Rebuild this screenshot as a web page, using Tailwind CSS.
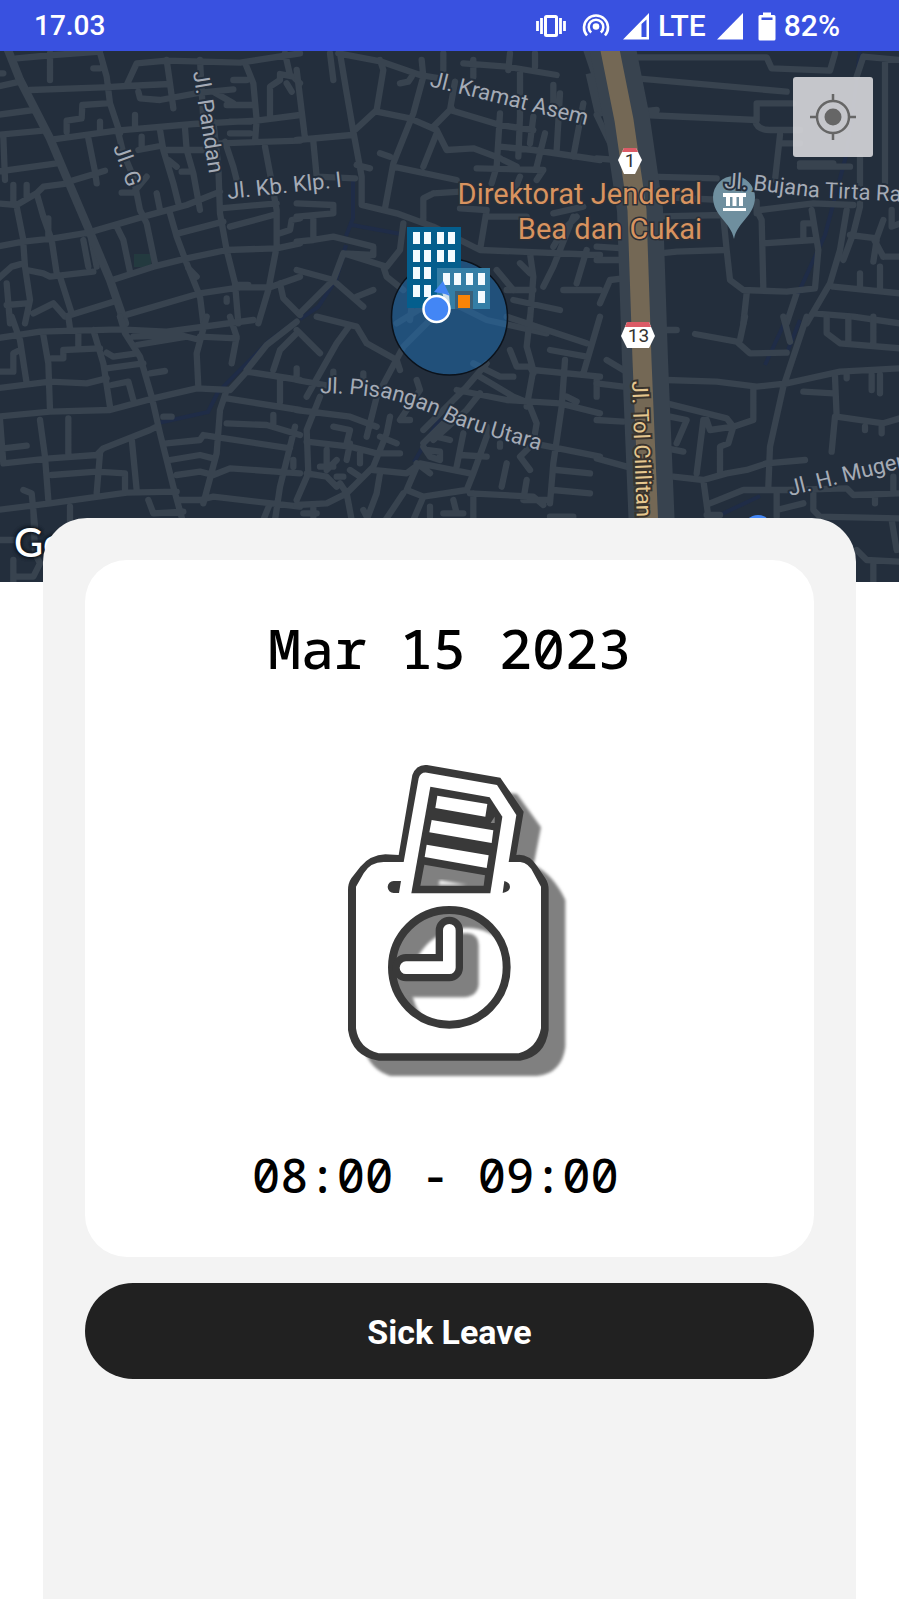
<!DOCTYPE html>
<html lang="id">
<head>
<meta charset="utf-8">
<meta name="viewport" content="width=device-width, initial-scale=1">
<title>Attendance</title>
<script src="https://cdn.jsdelivr.net/npm/@tailwindcss/browser@4"></script>
</head>
<body class="flex min-h-screen flex-col bg-white font-['Roboto',sans-serif] text-black">
<header class="flex h-[51px] items-center bg-[#3951e0] pr-[59px] pl-[34px] font-medium text-white">
  <time class="flex-1 text-[28px] leading-[32px]">17.03</time>
  <div class="flex items-center text-[30px] leading-[32px]">
    <svg class="mr-4 h-[30px] w-[30px]" viewBox="0 0 30 30" fill="none" stroke="#fff" aria-label="Vibrate"><rect x="9.5" y="5.500" width="11" height="19" rx="1" stroke-width="3"/><path d="M5.500 7v16M1.500 10v10M24.500 7v16M28.500 10v10" stroke-width="2.800"/></svg>
    <svg class="mr-3 h-[30px] w-[28px]" viewBox="0 0 28 30" fill="none" stroke="#fff" stroke-width="2.600" aria-label="Hotspot"><circle cx="14" cy="15.500" r="3.300" fill="#fff" stroke="none"/><path d="M9.200 21.500a7.300 7.300 0 1 1 9.600 0M5 24.500a12 12 0 1 1 18 0"/></svg>
    <svg class="mr-2 h-[30px] w-[28px]" viewBox="0 0 28 30" fill="#fff" aria-label="Signal"><path fill-rule="evenodd" d="M1 28.500 27 2v26.500zM19.500 13v13h5V8.500z"/></svg>
    <span>LTE</span>
    <svg class="ml-2.5 h-[30px] w-[28px]" viewBox="0 0 28 30" fill="#fff" aria-label="Signal"><path d="M1 28.500 27 2v26.500z"/></svg>
    <svg class="mr-2 ml-3.5 h-[30px] w-[18px]" viewBox="0 0 18 30" fill="#fff" aria-label="Battery"><path fill-rule="evenodd" d="M5 1.500h8V4h3q1.500 0 1.500 1.500V28q0 1.500-1.500 1.500H2Q.5 29.500.5 28V5.500Q.5 4 2 4h3zM3.500 6.500V9h11V6.500z"/></svg>
    <span>82%</span>
  </div>
</header>

<section class="relative h-[531px] overflow-hidden bg-[#232e3c]" aria-label="Map">
  <svg class="block h-full w-full" viewBox="0 51 899 531" preserveAspectRatio="xMidYMid slice" font-family="Roboto, sans-serif">
    <!-- waterways -->
    <g fill="none" stroke="#1f2c47" stroke-width="4">
      <path d="M353 180v38l-7 18M352 225l49 9M346 245l-10 35-18 27-18 12M295 322l-27 20-50 50-10 20-50 11M440 418l-26 44M860 50q-6 60-15 110l-20 75-30 65-30 65M800 320l-12 30M722 514l38-18"/>
    </g>
    <rect x="134" y="254" width="17" height="13" fill="#233a3f"/>
    <!-- streets, drawn on a 3x grid per tile -->
    <g fill="none" stroke="#38434f" stroke-width="19" stroke-linejoin="round" stroke-linecap="round">
      <g transform="translate(0 50) scale(.33333)">
        <path d="M20-10 60 90 150 265 205 395 265 535 330 690 375 820M-10 110 60 95M90 120 310 112 380 108 510 102M295-10 320 80 330 160 360 250M50 25 160 15 300 5M150 10V90M380 105 410 40 500 32 720 38 900 10M500 30 510 100 520 175M-10 195 100 180M-10 255 130 242M160 268 350 242 580 222 770 212 900 195M200 245V212L245 205 247 165 320 160M300 240V215M405 235V195M415 125 420 145 480 150 600 128 700 118M735 38 760 100 770 210 765 275M680 165 765 165M690 215H750M690 250H750M700 90H740M265 265 285 365 290 400M205 395 315 362M-10 365 170 340M-10 460 50 465 110 430 130 410 205 400M40 405V460M80 405V440M50 470 70 570M110 430 130 500 155 570 170 670M145 505V560M-10 590 70 575 160 565 265 548 430 500 560 465 660 425M355 250 370 310 400 380 420 480 440 520 465 640M350 530 370 570 390 665M415 300 480 288M425 260V290M480 240 490 300 520 400 535 460M555 235 560 300 580 370 600 480M500 300 650 300M505 330 530 350M545 365H570M470 430 480 480M365 428H400L440 380M600 30 610 210M640 215 655 350 660 490 680 600 705 700 715 820M675 275 700 350 710 390M660 280 900 272M795 290 810 370 830 480 830 590 805 720 775 820M660 475 830 460M690 530 820 495M510 490 530 560 560 640 600 740 610 820M535 550 670 515M330 692 460 650 560 625 680 600 830 595 900 580M565 655 590 680M360 800 600 730 720 712 810 712 900 680M250 570 265 650M270 550 290 650M70 580 75 650 90 750 75 820M-10 690 35 650 70 640M80 660 130 670 150 680 280 665M180 680 215 790M100 790 160 760 195 800 340 755M20 700 30 820M20 765 80 760M840 700 850 745 900 795M680 745V755M855 10 870 75M810 200V110L840 90V72L880 80 900 100M860 100 875 125M840 550 870 540 875 510 900 505M-10 170V340M10 260 15 390M640 125 700 160M0 70H10M280 55H300M745 705H715"/>
        <path stroke-width="25" d="M20-10 60 90 150 265 205 395 265 535 330 690 375 820"/>
      </g>
      <g transform="translate(300 50) scale(.33333)">
        <path d="M-10 60 15 265M90 10 100 90M120 10 140 130 160 245 185 380 185 465 290 490 400 530M115 10 245 35 360 75 420 85M240 30 250 60 230 180 165 240M230 185 330 205 410 240 440 300 520 295 600 325M365 30 370 80 340 190 280 340 255 475M300 100 325 95 335 80M-10 270 155 255M40 275 50 380 165 385M240 310 270 320M170 345 210 355M280 350 470 390M410 250 370 350M455 175 400 230M450 180 600 225 700 240M430 10V80M465 95 450 180M490 40 620 50 770 75M520 30V80M630 10 625 60M705 10V50M660 70V200M760 105V180M600 190 590 350 575 400M660 200 655 320M600 290 700 300 900 330M610 330 650 350M530 355 730 360 710 390M735 250 710 350M700 200 690 280M780 130 770 300M850 160 820 320M660 380 640 430M400 430 370 445V510M400 430 480 425M480 475 560 480M760 490 850 470M820 500 760 650 730 710M560 480 540 600M570 500 680 500M400 530 540 600 900 615M480 570 540 600M690 610 700 680 690 810M-10 460 100 465V490L-10 500M40 500V570L-10 575M40 570 100 560 220 590V615L130 610 100 690-10 660M130 610 260 650 300 600 310 520M100 690 0 790M110 700 190 770M250 650 260 680 310 720M170 740 220 720M640 750 780 780M620 720 700 720M790 720H900M660 640 690 670M760 590 790 540 830 500M860 600 830 700"/>
        <path stroke-width="27" stroke-linecap="butt" d="M860-10 900 110M900 200 870 70"/>
        <path d="M290 820 420 740 560 810 740 850M590 660 640 720M350 640 330 810"/>
      </g>
      <g transform="translate(600 50) scale(.33333)">
        <path d="M90 22H500L515 55 690 62 705 10M110 85 560 125M120 185 170 180M130 195 470 210V160H580M465 210Q470 240 510 240H600M540 255 525 390M545 280H600M150 380 350 385M150 440 370 450M150 500 370 495M180 610 230 605 370 600M370 500 380 600 390 690 430 720 560 725 645 715 655 600 635 480M470 480 485 510 490 715M480 480 640 460 760 465M490 580 640 570M610 570V520H640M440 730 430 820M590 730 560 820M740 480 720 600 690 700 620 820M750 350H600M780 320V470L760 550 730 630M750 555 830 565 850 510M830 570 820 635M850 620H900M700 710 900 730M780 670V715M840 650V720M640 790 760 800 900 820M790 20 900 30M855 40V400M790 20 770 80M875 480V530L900 520M-10 590 70 595M-10 630 70 630M-10 325 50 330M-10 195 50 320M0 760 30 690 70 685M820 565 850 620M470 455 470 490M600 340H700"/>
      </g>
      <g transform="translate(0 320) scale(.33333)">
        <path d="M-10 55 120 35 360 28 500 35 760 0M360-10 375 40 420 110 455 230 480 340 520 500 550 610M35-10 60 60 80 190M205-10 210 25M280 30 310 130 330 260M130 45 145 130 150 270M155 115H190V90L300 85M235 35V75M320 98 340 110 410 100M320 145 430 130M-10 205 150 185 260 190 320 175M-10 290 150 275 330 270 460 235 590 205 690 210 740 155 900 180M450 160 495 153M335 195 385 185 400 240M400 50 540 45 600 60M410 75 560 50M600 50 710 55M620-10 590 100 595 200M690-10 710 50 695 130M740 150 800 75 890 5M820 150 840 90 890 40M890 165V145M680 235 900 270M840 180V245M680 210 660 270 650 400 610 550M0 300 10 430M10 430 150 415 290 405 310 385 450 330 470 320M120 300 135 410 145 540M205 295V405M10 385 80 377M155 465 290 455 375 460V510M300 400 290 520M395 355 410 510M-10 570 150 550 380 518 530 515M70 510 95 520 105 620M490 290H515M500 370 600 360 610 345 640 350 870 385M510 420 600 405 640 415M530 465 600 455 640 465 690 445 900 460M540 540H600L640 530 900 560M680 310 800 315 900 345M820 285V310M885 320 870 380 840 500 825 600M880 420V440M790 600 810 550M445 540 460 580 550 575M210 560V600M-10 660 50 660M100 570 105 700 120 730 100 770 50 770M40 720V790M-10 155H40V100L60 90"/>
      </g>
      <g transform="translate(300 320) scale(.33333)">
        <path d="M-10 30 60 100M150 15 110 70 20 230M50-10 170 20 200 70 290 120 300 150M400-10 310 80 230 230 200 350M-10 180 100 200M-10 270 150 290 230 320M60 230 40 280 20 330 25 460-10 540M20 365 150 380 230 400 300 400M270 290 260 340 220 440 140 520 80 550-10 555M350 180 360 210 300 300 330 300M190 160V200M100 155V180M240 350 290 370M220 450 320 460 360 430 510 460M350 440 320 510 370 530 500 510 520 460 560 350 560 320M240 460 230 520 200 600M310 520 250 610M370 530 340 600M140 520 155 600M520 520V600M510 520 700 530 730 555M540 220 500 270 400 360M470 210 620 240 780 250 900 280M370 380 390 410 420 420 420 395 380 390M410 350 450 360M490 340 470 440M560 410 480 405M450 290 370 370M560 130 500 200 370 330M540 170 640 230 690 250M620 -10 860 70M630 90 650 140 690 140 700 160M690-10 680 80 700 150 900 170M520 130 600 170 640 170M750 90 860 110M900-10 850 160M795 120 785 260 760 430 750 550M800 230 830 245M700 150 680 260M690 260 710 310 700 370 660 410 690 450M600 380V370M620 430 605 500M700 370 900 410M770 450 870 460M760 510 870 520M680 480 670 540H740M750 590H820M20 460 80 470 110 500M80 390V450L110 420M60 440H100M150 370 140 420M180 400V430M150 450 180 470M110 470H130M120 490 140 520M390 560V590M460 540 470 580M430 580H490M40 560V590M10 580H50M200 590 190 570M100 320 150 330 140 370M350 430 390 460M890 180V230"/>
      </g>
      <g transform="translate(600 320) scale(.33333)">
        <path d="M190 30H230M285 42 410 65 450 100 560 98M435-10 420 60M550-10 570 65M620-10 590 80 550 200 510 380 505 500M680-10V40L720 70 900 85M745-10V70M820-10V70M200 180 350 185 470 200 560 190 720 155 900 145M460 205V300L400 320 330 330 320 300M200 250 380 295 400 320 385 370 360 380V460M210 290 260 300 230 370M200 385 250 395M310 300 290 460M220 470 310 480 380 460 440 450 500 430 615 420M310 480 325 590M330 550 430 510 560 510M320 585H360M530 520V590M530 570 610 550M560 510 740 505 760 525 900 520M640 520 640 570 660 590 900 595M610 215 700 220M705 170 710 290 850 310 900 295M705 290 695 395M815 165V210M840 165V220M795 320V330M845 320V340M740 165V175M825 530V550M875 600 890 690M770 690 800 720 900 725M820 730V790M880 470V510M-10 190 70 200M-10 300 70 305M-10 415 80 440M20 120 70 150"/>
      </g>
    </g>
    <!-- toll road -->
    <g fill="none" stroke-linejoin="round">
      <path d="M611 40 627 120 640 210 645 360 652 530" stroke="#38434f" stroke-width="46"/>
      <path d="M608 40 624 120 637 210 642 360 649 530" stroke="#746855" stroke-width="19"/>
    </g>
    <!-- geofence around the office -->
    <circle cx="449.500" cy="317" r="58" fill="#216fb4" fill-opacity=".52" stroke="#0b121b" stroke-width="1.500"/>

    <!-- street names -->
    <g fill="#a5abb6" stroke="#232e3c" stroke-width="4" stroke-linejoin="round" paint-order="stroke" font-size="22">
      <text transform="translate(193 72) rotate(81)">Jl. Pandan</text>
      <text transform="translate(113 147) rotate(70)">Jl. G</text>
      <text transform="translate(228 199) rotate(-6)">Jl. Kb. Klp. I</text>
      <text transform="translate(429 86) rotate(14)">Jl. Kramat Asem</text>
      <text transform="translate(790 496) rotate(-14)">Jl. H. Muger</text>
      <path id="pisangan" d="M320 393 350 394 385 398 410 405 435 415 448 422 490 436 545 452" fill="none" stroke="none"/>
      <text><textPath href="#pisangan">Jl. Pisangan Baru Utara</textPath></text>
    </g>
    <text transform="translate(632 381) rotate(88)" fill="#e5c78f" stroke="#39342e" stroke-width="4" paint-order="stroke" font-size="22">Jl. Tol Cililitan</text>
    <g fill="#d8935f" stroke="#2b2f37" stroke-width="3" paint-order="stroke" font-size="29" text-anchor="end">
      <text x="702" y="204">Direktorat Jenderal</text>
      <text x="702" y="239">Bea dan Cukai</text>
    </g>

    <!-- route shields -->
    <g text-anchor="middle" font-size="19">
      <path d="M624 148h12l6 12-7 14h-11l-6-14z" fill="#fff"/><path d="M624 148h12l2 4h-16z" fill="#db5b66"/>
      <text x="630" y="167" fill="#333">1</text>
      <path d="M627 322h22l6 14-6 12h-22l-6-12z" fill="#fff"/><path d="M627 322h22l2 5h-26z" fill="#db5b66"/>
      <text x="638.500" y="342" fill="#333">13</text>
    </g>

    <!-- museum pin -->
    <path d="M734 239c-3-17-21-23-21-42a21 21 0 0 1 42 0c0 19-18 25-21 42z" fill="#6f8f9f"/>
    <path d="M723 193h23v4h-23zM726 197h4v9h-4zM732.500 197h4v9h-4zM739 197h4v9h-4zM723 208h23v3h-23z" fill="#fff"/>
    <path id="bujana" d="M724 188 753 190 812 197 910 202" fill="none"/>
    <text fill="#a5abb6" stroke="#232e3c" stroke-width="4" paint-order="stroke" font-size="22"><textPath href="#bujana">Jl. Bujana Tirta Raya</textPath></text>

    <!-- office building -->
    <g>
      <path d="M407 227h54v42h-20v39h-34z" fill="#045e8d"/>
      <path d="M437 268h53v41h-53z" fill="#347ea6"/>
      <path d="M413 232h7v12h-7zm11 0h7v12h-7zm13 0h7v12h-7zm11 0h7v12h-7zM413 250h7v12h-7zm11 0h7v12h-7zm13 0h7v12h-7zm11 0h7v12h-7zM413 267h7v12h-7zm11 0h7v12h-7zM413 285h7v12h-7zm11 0h7v12h-7zM443 273h7v12h-7zm11 0h7v12h-7zm12 0h7v12h-7zm12 0h7v12h-7zM478 291h7v12h-7z" fill="#f3fafe"/>
      <path d="M455 291h18v18h-18z" fill="#3a5f78"/><path d="M458 295h12v13h-12z" fill="#f98407"/>
      <path d="m442 292 7 1 1 13h-4z" fill="#fff" fill-opacity=".75"/><path d="m443 281 7 15-5-2-11-2z" fill="#4386f5"/>
      <circle cx="436.500" cy="309" r="13" fill="#4386f5" stroke="#fff" stroke-width="2.500"/>
    </g>
    <circle cx="758" cy="529" r="14" fill="#4386f5"/>
  </svg>
  <button type="button" aria-label="My location" class="absolute top-[26px] right-[26px] flex h-[80px] w-[80px] items-center justify-center rounded-[3px] bg-[#d7d7da]/90">
    <svg class="h-[46px] w-[46px]" viewBox="0 0 46 46" fill="none" stroke="#666"><circle cx="23" cy="23" r="16" stroke-width="2.500"/><circle cx="23" cy="23" r="8.500" fill="#666" stroke="none"/><path d="M23 0v8M23 38v8M0 23h8M38 23h8" stroke-width="2.500"/></svg>
  </button>
  <span class="absolute top-[471px] left-[14px] font-[Lato,sans-serif] text-[40px] leading-[40px] font-medium text-white [text-shadow:0_0_3px_#111820,0_0_3px_#111820,0_0_4px_#111820,0_0_4px_#111820]">Google</span>
</section>

<main class="relative mx-[43px] -mt-16 flex flex-1 flex-col gap-[26px] rounded-t-[44px] bg-[#f3f3f3] px-[42px] pt-[42px]">
  <section class="flex flex-col items-center rounded-[42px] bg-white pt-[56px] pb-[50px] font-['Noto_Sans_Mono','DejaVu_Sans_Mono',monospace] font-medium">
    <h1 class="text-[55px] leading-[64px]">Mar 15 2023</h1>
    <svg class="mt-[80px] h-[320px] w-[270px]" viewBox="-16 60 810 960" aria-label="Time clock">
      <defs>
        <filter id="soft" x="-10%" y="-10%" width="120%" height="120%"><feGaussianBlur stdDeviation="5"/></filter>
        <clipPath id="face"><circle cx="387" cy="682" r="174"/></clipPath>
        <clipPath id="slip"><path d="M330 140 505 170 545 230 510 458H275z"/></clipPath>
      </defs>
      <g fill="#808080" filter="url(#soft)">
        <path d="M350 130 590 162 662 262 640 375Q700 405 735 480V920Q725 1000 650 1008H210Q150 990 130 925V480Q190 390 290 390z"/>
      </g>
      <path d="M235 345 276 105Q288 72 320 75L540 113 610 215 588 345Q625 340 650 378L675 415Q685 430 685 450V870Q675 950 600 962H175Q95 950 83 870V450Q83 430 93 415L120 380Q150 345 195 343z" fill="#393939"/>
      <path d="M250 366 295 115Q300 96 320 98L530 135 588 225 565 366H600Q625 368 640 400L662 440V865Q650 925 595 940H175Q115 925 107 865V440L130 400Q150 366 190 366z" fill="#fff"/>
      <path d="M330 140 508 172 546 230 510 460H273z" fill="#393939"/>
      <g fill="#fff"><path d="M351 167 501 192 495 230 345 204zM334 240 519 271 514 309 327 277zM319 314 505 346 499 384 313 351z"/></g>
      <path d="M511 249 523 230V249z" fill="#808080"/>
      <g clip-path="url(#slip)"><path d="M312 374 494 406 490 437H300z" fill="#808080"/><path d="M358 420 440 435H355z" fill="#eee" filter="url(#soft)"/></g>
      <path d="M242 423H220a18 18 0 0 0 0 36H236zM552 423Q569 428 569 441T547 459z" fill="#393939"/>
      <g clip-path="url(#face)">
        <path d="M210 500H570V860H210z" fill="#808080"/>
        <circle cx="438" cy="730" r="166" fill="#fff" filter="url(#soft)"/>
        <path d="M230 690H395V580H445Q475 585 475 615V735Q470 770 430 772H230z" fill="#808080" filter="url(#soft)"/>
      </g>
      <circle cx="387" cy="682" r="172" fill="none" stroke="#393939" stroke-width="24"/>
      <path d="M387 571V683H257" fill="none" stroke="#393939" stroke-width="82" stroke-linecap="round" stroke-linejoin="round"/>
      <path d="M387 571V683H257" fill="none" stroke="#fff" stroke-width="38" stroke-linecap="round" stroke-linejoin="round"/>
    </svg>
    <p class="mt-[63px] text-[47px] leading-[64px] whitespace-pre">08:00 - 09:00 </p>
  </section>
  <button type="button" class="h-24 w-full rounded-full bg-[#212121] pt-0.5 text-[34px] font-bold text-white">Sick Leave</button>
</main>
</body>
</html>
